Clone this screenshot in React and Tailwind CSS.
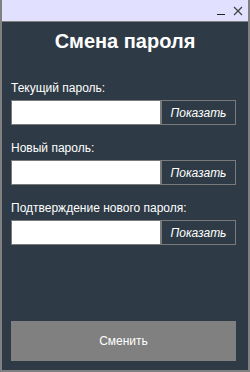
import React from "react";

function Field({ label }) {
  return (
    <div className="flex flex-col">
      <div className="text-[12px] leading-[14px] text-white h-[14px]">{label}</div>
      <div className="mt-[5px] flex h-[25px]">
        <div className="w-[150px] h-[25px] bg-white border border-[#7a7a7a]" />
        <div className="w-[75px] h-[25px] border border-[#7a7a7a] flex items-center justify-center italic text-[12px] text-white">
          Показать
        </div>
      </div>
    </div>
  );
}

export default function App() {
  return (
    <div
      className="w-[250px] h-[372px] bg-[#808080] px-[2px] pb-[2px] flex flex-col"
      style={{ fontFamily: '"Liberation Sans", Arial, sans-serif' }}
    >
      <div className="h-[21px] bg-[#e1e1ff] flex items-start justify-end pr-[5px] gap-[8px] text-[#333]">
        <div className="w-[8px] h-[14px] border-b border-[#222] mt-[1px]" />
        <svg width="10" height="10" viewBox="0 0 10 10" className="mt-[6px]">
          <path d="M1 1 L9 9 M9 1 L1 9" stroke="#444" strokeWidth="1.3" />
        </svg>
      </div>
      <div className="h-[1px]" />
      <div className="flex-1 bg-[#2e3b46] flex flex-col px-[9px]">
        <div className="mt-[7px] text-center text-white font-bold text-[20px] leading-[24px]">
          Смена пароля
        </div>
        <div className="mt-[28px] flex flex-col gap-[16px]">
          <Field label="Текущий пароль:" />
          <Field label="Новый пароль:" />
          <Field label="Подтверждение нового пароля:" />
        </div>
        <div className="mt-auto mb-[9px] h-[40px] w-[225px] bg-[#808080] flex items-center justify-center text-white text-[12px]">
          Сменить
        </div>
      </div>
    </div>
  );
}
